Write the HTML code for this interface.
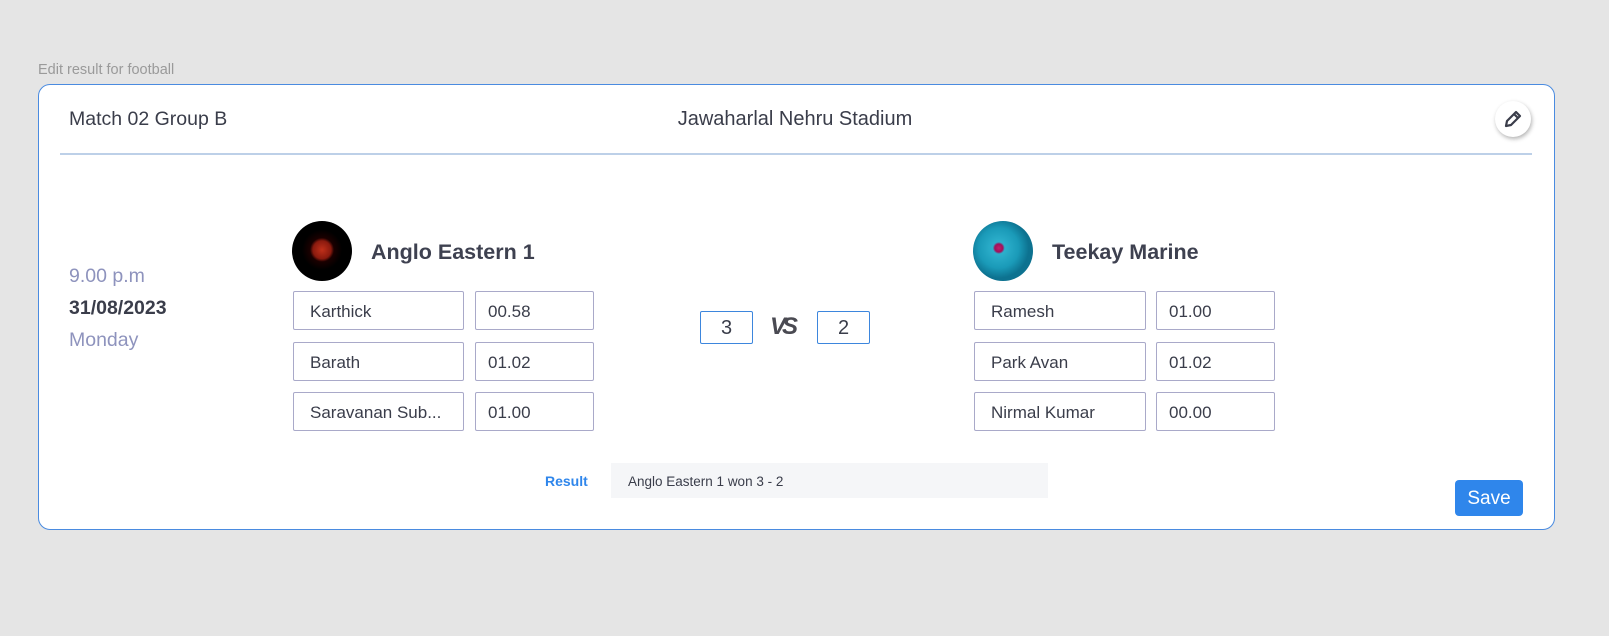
<!DOCTYPE html>
<html><head><meta charset="utf-8"><style>
*{box-sizing:border-box;margin:0;padding:0}
body{width:1609px;height:636px;background:#e5e5e5;font-family:"Liberation Sans",sans-serif;position:relative;overflow:hidden;color:#3a3d4a}
.a{position:absolute}
.card{left:38px;top:84px;width:1517px;height:446px;background:#fff;border:1.5px solid #4a8be0;border-radius:12px}
.in{position:absolute;height:39px;border:1.5px solid #a9a9c9;border-radius:2px;font-size:17px;line-height:40px;padding-left:16px;color:#3a3d4a;background:#fff}
.sc{position:absolute;height:33px;width:53px;border:1.5px solid #3d86dd;border-radius:2px;font-size:20px;line-height:32px;text-align:center;color:#3a3d4a}
.tn{position:absolute;font-size:21.5px;font-weight:bold;color:#3e4150}
</style></head><body>
<div class="a" style="left:38px;top:62px;font-size:14.5px;color:#9a9a9a">Edit result for football</div>
<div class="a card"></div>
<div class="a" style="left:69px;top:108px;font-size:19.5px;color:#3a3d4a">Match 02 Group B</div>
<div class="a" style="left:595px;width:400px;text-align:center;top:108px;font-size:20px;color:#3a3d4a">Jawaharlal Nehru Stadium</div>
<div class="a" style="left:1495px;top:101px;width:36px;height:36px;border-radius:50%;background:#fff;box-shadow:1px 2px 4px rgba(0,0,0,.3)">
<svg width="36" height="36" viewBox="0 0 36 36"><path d="M11 25 L12 20 L21 11 L25 15 L16 24 Z M19 13 L23 17" fill="none" stroke="#3a3d4a" stroke-width="2.2" stroke-linejoin="round"/></svg></div>
<div class="a" style="left:60px;top:153px;width:1472px;height:1.5px;background:#bdd0e8"></div>
<div class="a" style="left:69px;top:265px;font-size:19.5px;color:#8e93bd">9.00 p.m</div>
<div class="a" style="left:69px;top:297px;font-size:19.5px;font-weight:bold;color:#3a3d4a">31/08/2023</div>
<div class="a" style="left:69px;top:329px;font-size:19.5px;color:#8e93bd">Monday</div>
<div class="a" style="left:292px;top:221px;width:60px;height:60px;border-radius:50%;background:radial-gradient(circle at 50% 48%,#c0301a 0,#8a1a0e 9px,#1a0000 12px,#000 20px)"></div>
<div class="tn" style="left:371px;top:240px">Anglo Eastern 1</div>
<div class="a" style="left:973px;top:221px;width:60px;height:60px;border-radius:50%;background:radial-gradient(circle at 43% 45%,#c0206a 0,#a0105a 4px,#2db0cc 6px,#1a9ab8 20px,#0d7290 30px)"></div>
<div class="tn" style="left:1052px;top:240px">Teekay Marine</div>
<div class="in" style="left:293px;top:291px;width:171px">Karthick</div>
<div class="in" style="left:475px;top:291px;width:119px;padding-left:12px">00.58</div>
<div class="in" style="left:293px;top:342px;width:171px">Barath</div>
<div class="in" style="left:475px;top:342px;width:119px;padding-left:12px">01.02</div>
<div class="in" style="left:293px;top:392px;width:171px">Saravanan Sub...</div>
<div class="in" style="left:475px;top:392px;width:119px;padding-left:12px">01.00</div>
<div class="in" style="left:974px;top:291px;width:172px">Ramesh</div>
<div class="in" style="left:1156px;top:291px;width:119px;padding-left:12px">01.00</div>
<div class="in" style="left:974px;top:342px;width:172px">Park Avan</div>
<div class="in" style="left:1156px;top:342px;width:119px;padding-left:12px">01.02</div>
<div class="in" style="left:974px;top:392px;width:172px">Nirmal Kumar</div>
<div class="in" style="left:1156px;top:392px;width:119px;padding-left:12px">00.00</div>
<div class="sc" style="left:700px;top:311px">3</div>
<div class="a" style="left:770px;top:313px;font-size:24px;font-weight:bold;font-style:italic;color:#4a4a52;letter-spacing:-4px">VS</div>
<div class="sc" style="left:817px;top:311px">2</div>
<div class="a" style="left:545px;top:473px;font-size:14px;font-weight:bold;color:#2f86eb">Result</div>
<div class="a" style="left:611px;top:463px;width:437px;height:35px;background:#f5f6f8;font-size:13.5px;line-height:37px;padding-left:17px;color:#3a3d4a">Anglo Eastern 1 won 3 - 2</div>
<div class="a" style="left:1455px;top:480px;width:68px;height:36px;background:#2f86eb;border-radius:4px;color:#fff;font-size:19px;line-height:38px;text-align:center">Save</div>
</body></html>
